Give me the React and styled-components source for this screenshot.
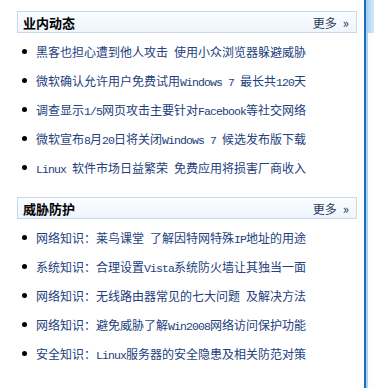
import React from 'react';
import styled, { createGlobalStyle } from 'styled-components';

const GlobalStyle = createGlobalStyle`
  html, body {
    margin: 0;
    padding: 0;
    background: #fff;
  }
  body {
    font-family: "Noto Sans CJK SC", "Liberation Sans", sans-serif;
    font-size: 12px;
  }
`;

const Page = styled.div`
  display: flex;
  width: 374px;
  height: 388px;
  overflow: hidden;
`;

const Main = styled.div`
  width: 364px;
  padding: 11px 0 0 17px;
  box-sizing: border-box;
`;

const Strip = styled.div`
  width: 10px;
  display: flex;
  flex-direction: column;
  border-left: 2px solid #1d6db5;
  box-sizing: border-box;
`;

const StripTop = styled.div`
  height: 33px;
  background: linear-gradient(90deg, #9fcdf0, #d4ebfb);
`;

const StripBody = styled.div`
  flex: 1;
  border-left: 2px solid #a9d4f3;
  background: #fbfdff;
`;

const Section = styled.section`
  width: 340px;
  margin-bottom: ${p => p.gap || 0}px;
`;

const Header = styled.div`
  height: 22px;
  box-sizing: border-box;
  border: 1px solid #c6d8ea;
  background: linear-gradient(180deg, #fbfdff, #eef5fc);
  display: flex;
  align-items: center;
  justify-content: space-between;
  padding: 0 7px 0 5px;
`;

const Title = styled.h3`
  margin: 0;
  font-size: 13px;
  font-weight: bold;
  color: #000;
`;

const More = styled.a`
  color: #2b3b5c;
  font-size: 12px;
  text-decoration: none;
  display: flex;
  align-items: center;
  gap: 6px;
`;

const Arrow = styled.span`
  font-size: 13px;
`;

const List = styled.ul`
  list-style: none;
  margin: 0;
  padding: 4px 0 0 0;
`;

const Item = styled.li`
  height: 29px;
  display: flex;
  align-items: center;
  padding-left: 5px;
  gap: 9px;
  &::before {
    content: '';
    width: 5px;
    height: 5px;
    border-radius: 50%;
    background: #000;
    flex: none;
  }
`;

const Link = styled.a`
  color: #23407e;
  text-decoration: none;
  white-space: nowrap;
  font-size: 12px;
`;

const Latin = styled.span`
  font-family: "Liberation Mono", monospace;
  font-size: 11.5px;
  letter-spacing: -0.9px;
  white-space: pre;
`;

const Mixed = ({ text }) =>
  text
    .split(/([\x20-\x7e]+)/)
    .filter(Boolean)
    .map((s, i) => (/^[\x20-\x7e]+$/.test(s) ? <Latin key={i}>{s}</Latin> : <span key={i}>{s}</span>));

const sections = [
  {
    title: '业内动态',
    items: [
      '黑客也担心遭到他人攻击 使用小众浏览器躲避威胁',
      '微软确认允许用户免费试用Windows 7 最长共120天',
      '调查显示1/5网页攻击主要针对Facebook等社交网络',
      '微软宣布8月20日将关闭Windows 7 候选发布版下载',
      'Linux 软件市场日益繁荣 免费应用将损害厂商收入',
    ],
  },
  {
    title: '威胁防护',
    items: [
      '网络知识：莱鸟课堂 了解因特网特殊IP地址的用途',
      '系统知识：合理设置Vista系统防火墙让其独当一面',
      '网络知识：无线路由器常见的七大问题 及解决方法',
      '网络知识：避免威胁了解Win2008网络访问保护功能',
      '安全知识：Linux服务器的安全隐患及相关防范对策',
    ],
  },
];

const App = () => (
  <Page>
    <GlobalStyle />
    <Main>
      {sections.map((s, i) => (
        <Section key={s.title} gap={i === 0 ? 15 : 0}>
          <Header>
            <Title>{s.title}</Title>
            <More href="#">
              <span>更多</span>
              <Arrow>»</Arrow>
            </More>
          </Header>
          <List>
            {s.items.map(t => (
              <Item key={t}>
                <Link href="#">
                  <Mixed text={t} />
                </Link>
              </Item>
            ))}
          </List>
        </Section>
      ))}
    </Main>
    <Strip>
      <StripTop />
      <StripBody />
    </Strip>
  </Page>
);

export default App;
